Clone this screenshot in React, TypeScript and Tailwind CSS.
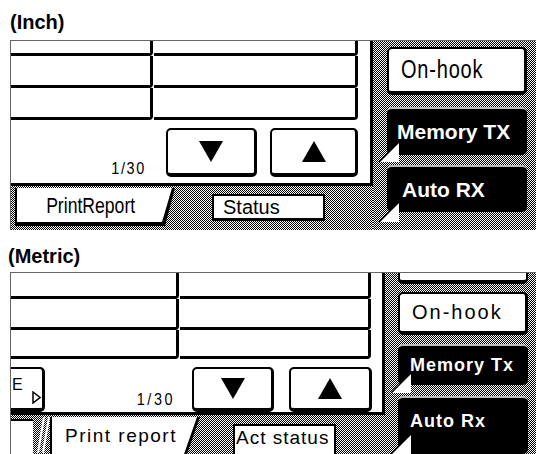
import React from "react";

const checker = "bg-[repeating-conic-gradient(#000_0_25%,#fff_0_50%)] bg-[length:2px_2px]";
const sans = "font-['Liberation_Sans',Arial,sans-serif]";

const cell = "bg-white border-b-[3px] border-r-[3px] border-black rounded-br-[4px]";
const btn = "bg-white border-2 border-black border-b-[4px] border-r-[3px] rounded-[5px] flex items-center justify-center";

function Arrow({ up }: { up?: boolean }) {
    return (
        <svg width="24" height="21" viewBox="0 0 24 21">
            {up ? <polygon points="12,0 24,21 0,21" fill="#000" /> : <polygon points="0,0 24,0 12,21" fill="#000" />}
        </svg>
    );
}

// triangulo branco no canto inferior esquerdo dos botoes pretos
function Corner({ className }: { className: string }) {
    return (
        <svg className={`absolute ${className}`} width="20" height="20" viewBox="0 0 20 20">
            <polygon points="0,20 20,0 20,20" fill="#fff" />
            <line x1="0" y1="20" x2="20" y2="0" stroke="#000" strokeWidth="1.5" />
        </svg>
    );
}

function InchPanel() {
    return (
        <div className="ml-[10px] h-[190px] flex border-t border-l border-[#666]">
            <div className="w-[362px] flex flex-col">
                <div className="h-[145px] bg-white border-r-[3px] border-b-[3px] border-black flex flex-col">
                    <div className="flex h-[15px]">
                        <div className={`w-[142px] ${cell}`} />
                        <div className={`w-[204px] ml-[1px] ${cell}`} />
                    </div>
                    <div className="flex h-[32px]">
                        <div className={`w-[142px] ${cell}`} />
                        <div className={`w-[204px] ml-[1px] ${cell}`} />
                    </div>
                    <div className="flex h-[32px]">
                        <div className={`w-[142px] ${cell}`} />
                        <div className={`w-[204px] ml-[1px] ${cell}`} />
                    </div>
                    <div className="flex flex-1 items-start">
                        <div className={`w-[135px] self-end mb-[6px] text-right text-[17px] leading-none ${sans}`}>
                            <span className="inline-block origin-right scale-x-[0.85] tracking-[2px]">1/30</span>
                        </div>
                        <div className={`ml-[20px] mt-[8px] w-[91px] h-[49px] ${btn}`}><Arrow /></div>
                        <div className={`ml-[13px] mt-[8px] w-[88px] h-[49px] ${btn}`}><Arrow up /></div>
                    </div>
                </div>
                <div className={`flex-1 flex items-start ${checker}`}>
                    <div className="ml-[4px] mt-[2px] w-[160px] h-[38px] bg-black pl-[2px] pb-[4px] pr-[3px] [clip-path:polygon(0_0,100%_0,calc(100%-10px)_100%,0_100%)]">
                        <div className={`h-full bg-white flex items-center justify-center pr-[8px] text-[22px] ${sans} [clip-path:polygon(0_0,100%_0,calc(100%-10px)_100%,0_100%)]`}>
                            <span className="inline-block scale-x-[0.8] whitespace-nowrap">PrintReport</span>
                        </div>
                    </div>
                    <div className={`ml-[37px] mt-[8px] w-[113px] h-[27px] bg-white border-2 border-black border-b-[3px] flex items-center pl-[9px] pb-[1px] text-[20px] leading-none ${sans}`}>
                        Status
                    </div>
                </div>
            </div>
            <div className={`flex-1 flex flex-col pl-[14px] pt-[6px] ${checker}`}>
                <div className={`w-[140px] h-[48px] ${btn} justify-start pl-[12px] text-[25px] ${sans}`}>
                    <span className="inline-block origin-left scale-x-[0.8] tracking-[1px] whitespace-nowrap">On-hook</span>
                </div>
                <div className="relative mt-[12px] w-[140px] h-[48px] bg-black rounded-[5px] border-t-2 border-[#bbb] flex items-center pl-[10px]">
                    <span className={`text-white font-bold text-[21px] ${sans}`}>Memory TX</span>
                    <Corner className="-left-[8px] -bottom-[7px]" />
                </div>
                <div className="relative mt-[10px] w-[140px] h-[47px] bg-black rounded-[5px] border-t-2 border-[#bbb] flex items-center pl-[15px]">
                    <span className={`text-white font-bold text-[21px] ${sans}`}>Auto RX</span>
                    <Corner className="-left-[8px] -bottom-[10px]" />
                </div>
            </div>
        </div>
    );
}

function MetricPanel() {
    return (
        <div className="ml-[10px] h-[182px] flex border-t border-l border-[#666]">
            <div className="w-[374px] flex flex-col">
                <div className="h-[145px] bg-white border-r-[3px] border-b-[3px] border-black flex flex-col">
                    <div className="flex h-[26px]">
                        <div className={`w-[168px] ${cell}`} />
                        <div className={`w-[191px] ml-[1px] ${cell}`} />
                    </div>
                    <div className="flex h-[31px]">
                        <div className={`w-[168px] ${cell}`} />
                        <div className={`w-[191px] ml-[1px] ${cell}`} />
                    </div>
                    <div className="flex h-[29px]">
                        <div className={`w-[168px] ${cell}`} />
                        <div className={`w-[191px] ml-[1px] ${cell}`} />
                    </div>
                    <div className="flex flex-1 items-start">
                        <div className="relative mt-[8px] w-[34px] h-[45px] bg-white border-y-2 border-r-[3px] border-b-[4px] border-black rounded-r-[5px]">
                            <span className={`absolute left-[1px] top-[8px] text-[16px] leading-none ${sans}`}>E</span>
                            <svg className="absolute left-[21px] top-[22px]" width="9" height="13" viewBox="0 0 9 13">
                                <polygon points="1,1 8,6.5 1,12" fill="#fff" stroke="#000" strokeWidth="1.5" />
                            </svg>
                        </div>
                        <div className={`w-[130px] self-end mb-[4px] text-right text-[17px] leading-none ${sans}`}>
                            <span className="inline-block origin-right scale-x-[0.85] tracking-[3px]">1/30</span>
                        </div>
                        <div className={`ml-[17px] mt-[8px] w-[82px] h-[45px] ${btn}`}><Arrow /></div>
                        <div className={`ml-[15px] mt-[8px] w-[83px] h-[45px] ${btn}`}><Arrow up /></div>
                    </div>
                </div>
                <div className={`flex-1 flex items-start ${checker}`}>
                    <div className="mt-[4px] w-[22px] h-[40px] bg-white border-t-2 border-black" />
                    <svg className="mt-[2px]" width="17" height="36" viewBox="0 0 17 36">
                        <line x1="5" y1="36" x2="11" y2="0" stroke="#fff" strokeWidth="2" />
                        <line x1="10" y1="36" x2="16" y2="0" stroke="#fff" strokeWidth="2" />
                    </svg>
                    <div className="mt-[2px] w-[150px] h-[40px] bg-black pl-[2px] pr-[3px] [clip-path:polygon(0_0,100%_0,calc(100%-14px)_100%,0_100%)]">
                        <div className={`h-full bg-white flex items-start pt-[5px] pl-[13px] text-[19px] tracking-[1.5px] whitespace-nowrap ${sans} [clip-path:polygon(0_0,100%_0,calc(100%-14px)_100%,0_100%)]`}>
                            Print report
                        </div>
                    </div>
                    <div className={`ml-[33px] mt-[9px] w-[103px] h-[32px] bg-white border-2 border-black flex items-start pt-[1px] pl-[1px] text-[19px] tracking-[1px] leading-[22px] whitespace-nowrap ${sans}`}>
                        Act status
                    </div>
                </div>
            </div>
            <div className={`flex-1 flex flex-col pl-[13px] ${checker}`}>
                <div className="w-[130px] h-[11px] bg-white border-x-2 border-b-[4px] border-black rounded-b-[5px]" />
                <div className={`mt-[8px] w-[130px] h-[45px] ${btn} justify-start pl-[12px] text-[20px] tracking-[2px] ${sans}`}>On-hook</div>
                <div className="relative mt-[9px] w-[130px] h-[43px] bg-black rounded-[5px] border-t-2 border-[#bbb] flex items-center pl-[12px]">
                    <span className={`text-white font-bold text-[18px] tracking-[1px] ${sans}`}>Memory Tx</span>
                    <Corner className="-left-[7px] -bottom-[8px]" />
                </div>
                <div className="relative mt-[11px] w-[130px] h-[60px] bg-black rounded-[5px] border-t-2 border-[#bbb] flex items-start pt-[10px] pl-[12px]">
                    <span className={`text-white font-bold text-[18px] tracking-[1px] ${sans}`}>Auto Rx</span>
                    <Corner className="-left-[7px] top-[36px]" />
                </div>
            </div>
        </div>
    );
}

export default function App() {
    return (
        <div className="w-[536px] h-[454px] bg-white overflow-hidden flex flex-col">
            <div className={`h-[40px] pl-[10px] pt-[10px] text-[20px] leading-[24px] font-bold ${sans}`}>(Inch)</div>
            <InchPanel />
            <div className={`h-[42px] pl-[8px] pt-[14px] text-[20px] leading-[24px] font-bold ${sans}`}>(Metric)</div>
            <MetricPanel />
        </div>
    );
}
